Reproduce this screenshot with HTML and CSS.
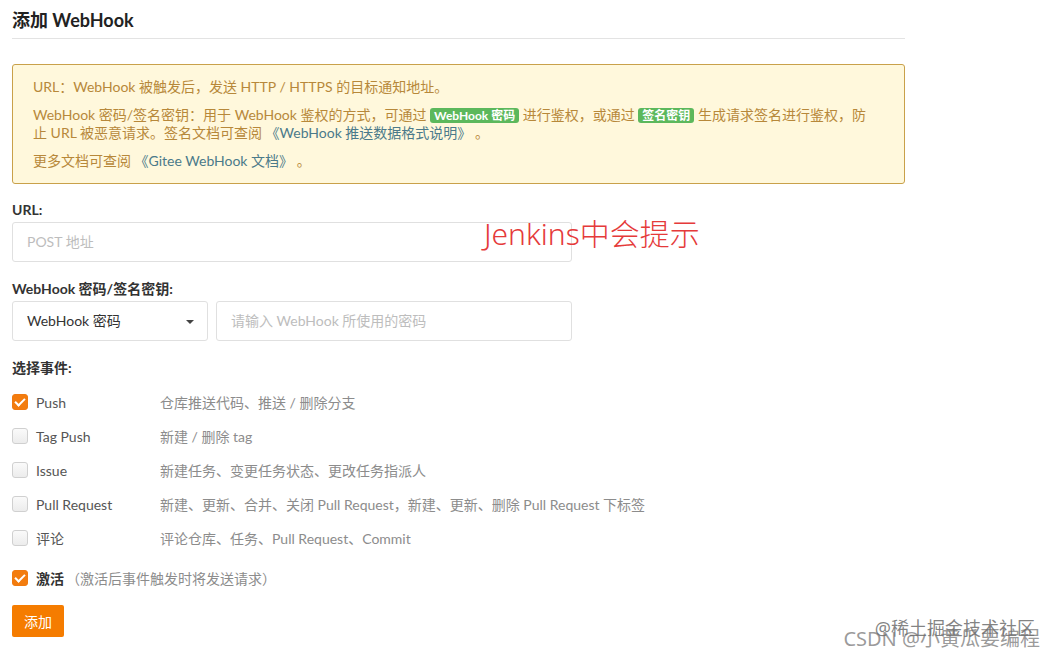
FILE: index.html
```html
<!DOCTYPE html>
<html lang="zh-CN">
<head>
    <meta charset="UTF-8">
    <title>添加 WebHook</title>
    <link rel="stylesheet" href="styles.css">
</head>
<body>
    <div class="page">
        <h2 class="title">添加 WebHook</h2>

        <div class="notice">
            <p>URL：WebHook 被触发后，发送 HTTP / HTTPS 的目标通知地址。</p>
            <p>WebHook 密码/签名密钥：用于 WebHook 鉴权的方式，可通过 <span class="tag">WebHook 密码</span> 进行鉴权，或通过 <span class="tag">签名密钥</span> 生成请求签名进行鉴权，防止 URL 被恶意请求。签名文档可查阅 <a href="#">《WebHook 推送数据格式说明》</a> 。</p>
            <p>更多文档可查阅 <a href="#">《Gitee WebHook 文档》</a> 。</p>
        </div>

        <div class="field">
            <label class="field-label">URL:</label>
            <div class="input wide placeholder">POST 地址</div>
        </div>

        <div class="field">
            <label class="field-label">WebHook 密码/签名密钥:</label>
            <div class="row">
                <div class="input select">WebHook 密码<span class="caret"></span></div>
                <div class="input secret placeholder">请输入 WebHook 所使用的密码</div>
            </div>
        </div>

        <div class="field events">
            <label class="field-label">选择事件:</label>
            <div class="event">
                <span class="box checked"></span>
                <span class="event-name">Push</span>
                <span class="event-desc">仓库推送代码、推送 / 删除分支</span>
            </div>
            <div class="event">
                <span class="box"></span>
                <span class="event-name">Tag Push</span>
                <span class="event-desc">新建 / 删除 tag</span>
            </div>
            <div class="event">
                <span class="box"></span>
                <span class="event-name">Issue</span>
                <span class="event-desc">新建任务、变更任务状态、更改任务指派人</span>
            </div>
            <div class="event">
                <span class="box"></span>
                <span class="event-name">Pull Request</span>
                <span class="event-desc">新建、更新、合并、关闭 Pull Request，新建、更新、删除 Pull Request 下标签</span>
            </div>
            <div class="event">
                <span class="box"></span>
                <span class="event-name">评论</span>
                <span class="event-desc">评论仓库、任务、Pull Request、Commit</span>
            </div>
        </div>

        <div class="event active">
            <span class="box checked"></span>
            <span class="active-name">激活</span>
            <span class="active-desc">（激活后事件触发时将发送请求）</span>
        </div>

        <button class="btn">添加</button>

        <div class="note">Jenkins中会提示</div>
    </div>

    <div class="watermark">
        <span class="wm-top">@稀土掘金技术社区</span>
        <span class="wm-bottom">CSDN @小黄瓜要编程</span>
    </div>
</body>
</html>
```

FILE: styles.css
```css
body {
    margin: 0;
    font-family: Lato, "Noto Sans CJK SC", sans-serif;
    font-size: 14px;
    color: #333;
    background: #fff;
}
.page {
    position: relative;
    width: 893px;
    padding: 8px 12px 20px;
}
.title {
    margin: 0;
    padding-bottom: 6px;
    font-size: 18px;
    line-height: 24px;
    font-weight: bold;
    color: #222;
    border-bottom: 1px solid #e3e3e3;
}
.notice {
    margin-top: 25px;
    padding: 13px 32px 13px 20px;
    background: #fff8dc;
    border: 1px solid #c9a14a;
    border-radius: 3px;
    color: #b7883a;
    line-height: 18px;
}
.notice p {
    margin: 0 0 10px;
}
.notice p:last-child {
    margin-bottom: 0;
}
.notice a {
    color: #4b7a8a;
    text-decoration: none;
}
.tag {
    display: inline-block;
    padding: 0 4px;
    line-height: 15px;
    font-size: 12px;
    font-weight: bold;
    color: #fff;
    background: #5cb85c;
    border-radius: 3px;
}
.field {
    margin-top: 17px;
}
.field + .field {
    margin-top: 18px;
}
.field-label {
    display: block;
    margin-bottom: 3px;
    line-height: 18px;
    font-weight: bold;
    color: #333;
}
.input {
    box-sizing: border-box;
    height: 40px;
    padding: 0 14px;
    border: 1px solid #e0e0e0;
    border-radius: 3px;
    line-height: 38px;
    color: #333;
}
.placeholder {
    color: #bdbdbd;
}
.wide {
    width: 560px;
}
.row {
    display: flex;
    gap: 8px;
}
.select {
    position: relative;
    width: 196px;
}
.caret {
    position: absolute;
    right: 13px;
    top: 18px;
    border-left: 4px solid transparent;
    border-right: 4px solid transparent;
    border-top: 4px solid #444;
}
.secret {
    width: 356px;
}
.events .field-label {
    margin-bottom: 8px;
}
.event {
    display: flex;
    align-items: center;
    height: 34px;
}
.box {
    box-sizing: border-box;
    position: relative;
    width: 16px;
    height: 16px;
    margin-right: 8px;
    border: 1px solid #d0d0d0;
    border-radius: 3px;
    background: linear-gradient(#fafafa, #ececec);
}
.box.checked {
    border-color: #f07a10;
    background: #f37c0e;
}
.box.checked::after {
    content: "";
    position: absolute;
    left: 4px;
    top: 1px;
    width: 4px;
    height: 8px;
    border: solid #fff;
    border-width: 0 2px 2px 0;
    transform: rotate(45deg);
}
.event-name {
    width: 124px;
    color: #555;
}
.event-desc {
    color: #8c8c8c;
}
.active {
    margin-top: 6px;
}
.active-name {
    font-weight: bold;
    color: #333;
}
.active-desc {
    margin-left: 2px;
    color: #8c8c8c;
}
.btn {
    margin-top: 10px;
    height: 32px;
    padding: 0 12px;
    border: none;
    border-radius: 2px;
    background: #f57c00;
    color: #fff;
    font-family: Lato, "Noto Sans CJK SC", sans-serif;
    font-size: 14px;
    cursor: pointer;
}
.note {
    position: absolute;
    left: 484px;
    top: 216px;
    font-size: 30px;
    line-height: 36px;
    color: #e53a3a;
    font-family: "Noto Sans", "Noto Sans CJK SC", sans-serif;
    font-weight: 300;
}
.watermark {
    position: absolute;
    right: 14px;
    top: 614px;
    width: 200px;
    height: 36px;
    color: rgba(90, 90, 90, 0.75);
    font-size: 18px;
    font-family: "Noto Sans", "Noto Sans CJK SC", sans-serif;
}
.wm-top {
    position: absolute;
    right: 5px;
    top: 0;
    white-space: nowrap;
}
.wm-bottom {
    position: absolute;
    right: 0;
    top: 9px;
    font-size: 20px;
    white-space: nowrap;
    color: rgba(110, 110, 110, 0.7);
}
```
